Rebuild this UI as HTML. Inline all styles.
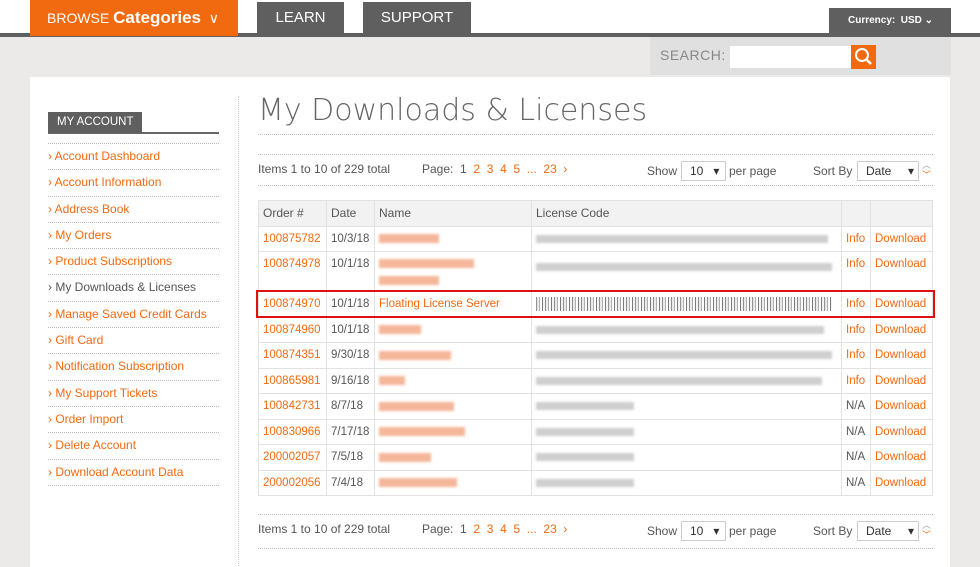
<!DOCTYPE html>
<html><head><meta charset="utf-8"><style>
*{margin:0;padding:0;box-sizing:border-box}
body{width:980px;height:560px;overflow:hidden;background:#eceae8;font-family:"Liberation Sans",Arial,sans-serif;position:relative;font-size:12px;color:#555}
.top{position:absolute;left:0;top:0;width:980px;height:33px;background:#fff}
.bar{position:absolute;left:0;top:33px;width:980px;height:4px;background:#5f5f5f}
.browse{position:absolute;left:30px;top:0;width:208px;height:36px;background:#f26a10;color:#fff;font-size:14px;line-height:35px;padding-left:17px}
.browse b{font-size:17px}
.tab{position:absolute;top:2px;height:32px;background:#5f5f5f;color:#fff;font-size:15px;line-height:32px;text-align:center}
.cur{position:absolute;left:829px;top:8px;width:122px;height:26px;background:#5f5f5f;color:#fff;font-size:10px;font-weight:bold;line-height:26px;padding-left:19px}
.search{position:absolute;left:650px;top:37px;width:301px;height:38px;background:#e0e0e0}
.search span{position:absolute;left:10px;top:10px;color:#888;font-size:14px;letter-spacing:.5px}
.search .in{position:absolute;left:80px;top:9px;width:122px;height:22px;background:#fff}
.search .btn{position:absolute;left:201px;top:8px;width:25px;height:24px;background:#f26a10}
.panel{position:absolute;left:30px;top:77px;width:920px;height:490px;background:#fff}
.side{position:absolute;left:48px;top:112px;width:171px}
.sh{height:22px;border-bottom:2px solid #666;position:relative}
.sh span{display:inline-block;background:#5f5f5f;color:#fff;font-size:11.5px;line-height:21px;padding:0 9px}
.side a{display:block;height:26.3px;line-height:24px;color:#f26a10;font-size:12px;text-decoration:none;border-bottom:1px dotted #bbb}
.side a.g{color:#555}
.vl{position:absolute;left:238px;top:96px;width:1px;height:470px;border-left:1px dotted #ccc}
h1{position:absolute;left:258px;top:93px;font-size:30px;color:#666;font-family:"DejaVu Sans","Liberation Sans",sans-serif;font-weight:200;letter-spacing:0}
.dl{position:absolute;left:258px;width:675px;border-top:1px dotted #bbb}
.pager{position:absolute;left:258px;width:675px;height:20px;font-size:12px;color:#555}
.pager .o{color:#f26a10}
.sel{position:absolute;border:1px solid #ccc;height:20px;background:#fff;font-size:12px;color:#333;line-height:18px;padding-left:8px}
table{position:absolute;left:258px;top:200px;width:675px;border-collapse:collapse;font-size:11.5px;table-layout:fixed}
td,th{border:1px solid #e2e2e2;padding:0 4px;height:25.5px;text-align:left;font-weight:normal;color:#555;white-space:nowrap;overflow:hidden}
th{background:#f2f2f2;font-size:12px}
td.o{color:#f26a10}
.bn{display:inline-block;height:9px;background:#f5b79a;filter:blur(1.2px);vertical-align:middle}
.bl{display:inline-block;height:8px;background:#cfcfcf;filter:blur(1.2px);vertical-align:middle}
.hl{position:absolute;left:256px;top:290px;width:679px;height:28px;border:2.5px solid #e01010}
.noise{display:inline-block;width:296px;height:14px;vertical-align:middle;background:repeating-linear-gradient(90deg,#444 0 1px,#ddd 1px 3px,#777 3px 4px,#fff 4px 6px,#222 6px 7px,#eee 7px 9px),#fff;opacity:.6}
</style></head><body>
<div class="top"></div><div class="bar"></div>
<div class="browse">BROWSE <b>Categories</b> &nbsp;∨</div>
<div class="tab" style="left:257px;width:87px">LEARN</div>
<div class="tab" style="left:363px;width:108px">SUPPORT</div>
<div class="cur">Currency: &nbsp;USD ⌄</div>
<div class="search"><span>SEARCH:</span><div class="in"></div><div class="btn"><svg width="25" height="24"><circle cx="11" cy="10" r="6" stroke="#fff" stroke-width="2" fill="none"/><path d="M15 14l5 5" stroke="#fff" stroke-width="2.5"/></svg></div></div>
<div class="panel"></div>
<div class="side">
<div class="sh"><span>MY ACCOUNT</span></div>
<div style="height:10px;border-bottom:1px dotted #bbb"></div>
<a>› Account Dashboard</a><a>› Account Information</a><a>› Address Book</a><a>› My Orders</a><a>› Product Subscriptions</a><a class="g">› My Downloads &amp; Licenses</a><a>› Manage Saved Credit Cards</a><a>› Gift Card</a><a>› Notification Subscription</a><a>› My Support Tickets</a><a>› Order Import</a><a>› Delete Account</a><a>› Download Account Data</a>
</div>
<div class="vl"></div>
<h1>My Downloads &amp; Licenses</h1>
<div class="dl" style="top:134px"></div>
<div class="dl" style="top:154px"></div>
<div class="pager" style="top:162px">Items 1 to 10 of 229 total<span style="position:absolute;left:164px">Page: &nbsp;1 <span class="o">&nbsp;2 &nbsp;3 &nbsp;4 &nbsp;5 &nbsp;... &nbsp;23 &nbsp;›</span></span><span style="position:absolute;left:389px;top:2px">Show</span><span style="position:absolute;left:471px;top:2px">per page</span><span style="position:absolute;left:555px;top:2px">Sort By</span><span style="position:absolute;left:664px;top:-4px;font-size:9px;color:#aaa">︿</span><span style="position:absolute;left:664px;top:6px;font-size:9px;color:#f26a10">﹀</span></div>
<div class="sel" style="left:681px;top:161px;width:45px">10 &nbsp;&nbsp;▾</div>
<div class="sel" style="left:857px;top:161px;width:62px">Date &nbsp;&nbsp;&nbsp;&nbsp;▾</div>
<div class="dl" style="top:185px"></div>
<table>
<colgroup><col style="width:68px"><col style="width:48px"><col style="width:157px"><col style="width:310px"><col style="width:29px"><col></colgroup>
<tr><th>Order #</th><th>Date</th><th>Name</th><th>License Code</th><th></th><th></th></tr>
<tr><td class="o">100875782</td><td>10/3/18</td><td><span class="bn" style="width:60px"></span></td><td><span class="bl" style="width:292px"></span></td><td class="o">Info</td><td class="o">Download</td></tr>
<tr style="height:40px"><td class="o" style="vertical-align:top;padding-top:6px">100874978</td><td style="vertical-align:top;padding-top:6px">10/1/18</td><td><span class="bn" style="width:95px"></span><br><span class="bn" style="width:60px;margin-top:6px"></span></td><td style="vertical-align:top;padding-top:9px"><span class="bl" style="width:296px"></span></td><td class="o" style="vertical-align:top;padding-top:6px">Info</td><td class="o" style="vertical-align:top;padding-top:6px">Download</td></tr>
<tr><td class="o">100874970</td><td>10/1/18</td><td class="o">Floating License Server</td><td><span class="noise"></span></td><td class="o">Info</td><td class="o">Download</td></tr>
<tr><td class="o">100874960</td><td>10/1/18</td><td><span class="bn" style="width:42px"></span></td><td><span class="bl" style="width:288px"></span></td><td class="o">Info</td><td class="o">Download</td></tr>
<tr><td class="o">100874351</td><td>9/30/18</td><td><span class="bn" style="width:72px"></span></td><td><span class="bl" style="width:296px"></span></td><td class="o">Info</td><td class="o">Download</td></tr>
<tr><td class="o">100865981</td><td>9/16/18</td><td><span class="bn" style="width:26px"></span></td><td><span class="bl" style="width:286px"></span></td><td class="o">Info</td><td class="o">Download</td></tr>
<tr><td class="o">100842731</td><td>8/7/18</td><td><span class="bn" style="width:75px"></span></td><td><span class="bl" style="width:98px"></span></td><td>N/A</td><td class="o">Download</td></tr>
<tr><td class="o">100830966</td><td>7/17/18</td><td><span class="bn" style="width:86px"></span></td><td><span class="bl" style="width:98px"></span></td><td>N/A</td><td class="o">Download</td></tr>
<tr><td class="o">200002057</td><td>7/5/18</td><td><span class="bn" style="width:52px"></span></td><td><span class="bl" style="width:98px"></span></td><td>N/A</td><td class="o">Download</td></tr>
<tr><td class="o">200002056</td><td>7/4/18</td><td><span class="bn" style="width:78px"></span></td><td><span class="bl" style="width:98px"></span></td><td>N/A</td><td class="o">Download</td></tr>
</table>
<div class="hl"></div>
<div class="dl" style="top:514px"></div>
<div class="pager" style="top:522px">Items 1 to 10 of 229 total<span style="position:absolute;left:164px">Page: &nbsp;1 <span class="o">&nbsp;2 &nbsp;3 &nbsp;4 &nbsp;5 &nbsp;... &nbsp;23 &nbsp;›</span></span><span style="position:absolute;left:389px;top:2px">Show</span><span style="position:absolute;left:471px;top:2px">per page</span><span style="position:absolute;left:555px;top:2px">Sort By</span><span style="position:absolute;left:664px;top:-4px;font-size:9px;color:#aaa">︿</span><span style="position:absolute;left:664px;top:6px;font-size:9px;color:#f26a10">﹀</span></div>
<div class="sel" style="left:681px;top:521px;width:45px">10 &nbsp;&nbsp;▾</div>
<div class="sel" style="left:857px;top:521px;width:62px">Date &nbsp;&nbsp;&nbsp;&nbsp;▾</div>
<div class="dl" style="top:548px"></div>
</body></html>
